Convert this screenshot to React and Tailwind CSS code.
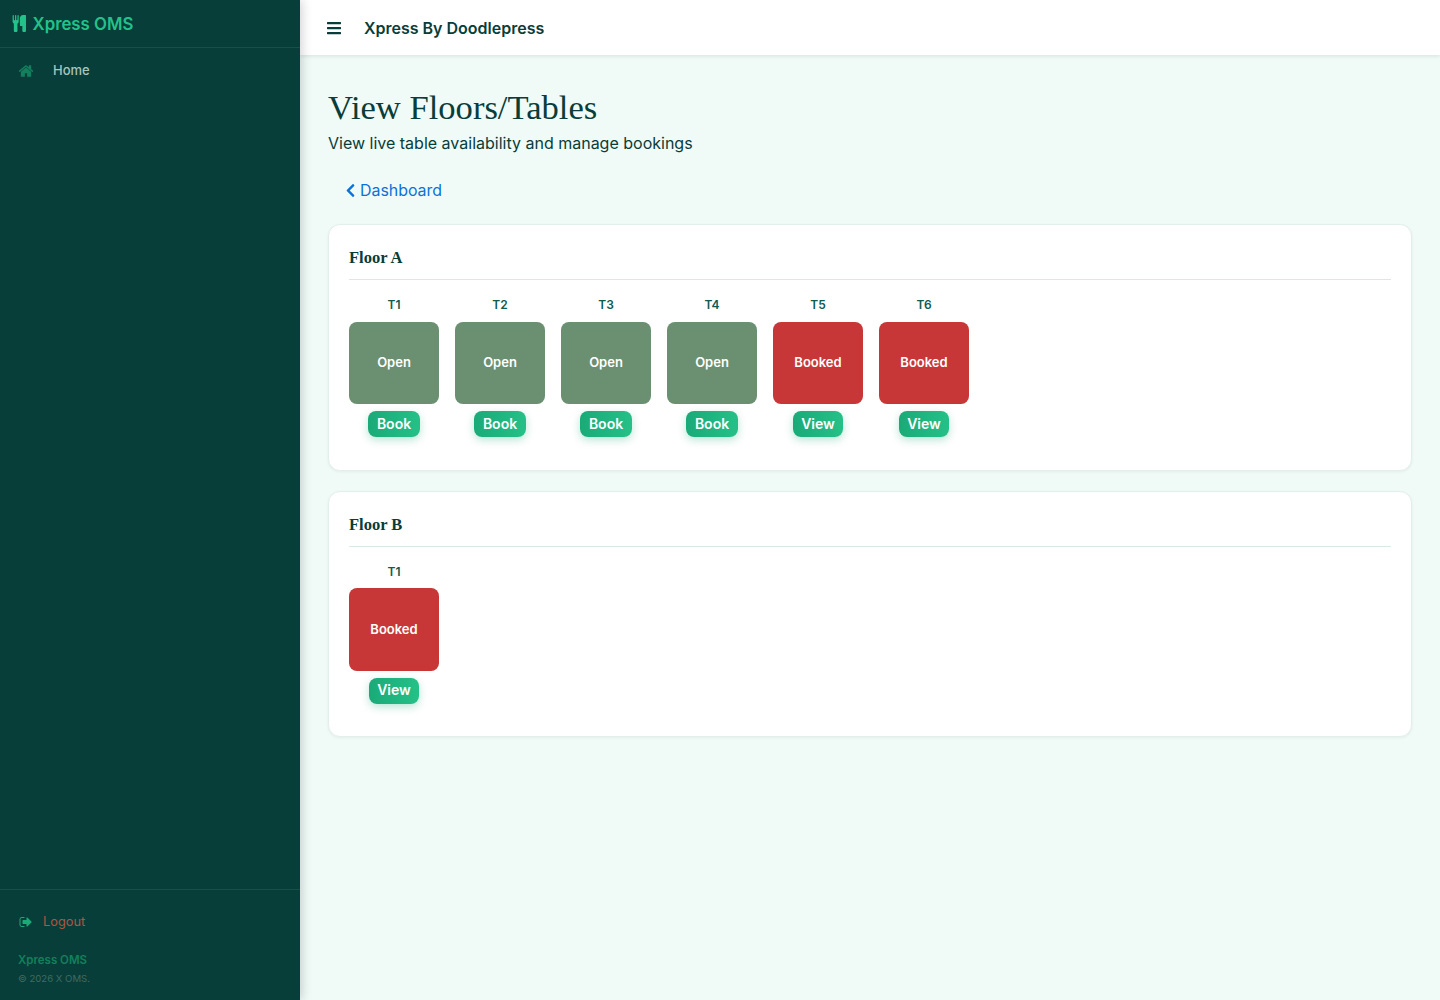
import { FaBars, FaChevronLeft } from "react-icons/fa";

const floorA = [
  { name: "T1", booked: false },
  { name: "T2", booked: false },
  { name: "T3", booked: false },
  { name: "T4", booked: false },
  { name: "T5", booked: true },
  { name: "T6", booked: true },
];

const floorB = [{ name: "T1", booked: true }];

// font awesome 4 glyphs, the react-icons ones have a different shape
const CutleryIcon = () => (
  <svg viewBox="0 0 1536 1792" className="h-[17px] w-[14.6px] fill-[#22c38a]">
    <path d="M704 64v640q0 61-35.5 111t-92.5 70v779q0 52-38 90t-90 38h-128q-52 0-90-38t-38-90v-779q-57-20-92.5-70t-35.5-111v-640q0-26 19-45t45-19 45 19 19 45v416q0 26 19 45t45 19 45-19 19-45v-416q0-26 19-45t45-19 45 19 19 45v416q0 26 19 45t45 19 45-19 19-45v-416q0-26 19-45t45-19 45 19 19 45zm768 0v1600q0 52-38 90t-90 38h-128q-52 0-90-38t-38-90v-512h-224q-13 0-22.5-9.5t-9.5-22.5v-800q0-132 94-226t226-94h256q26 0 45 19t19 45z" />
  </svg>
);

const HomeIcon = () => (
  <svg viewBox="0 0 1792 1792" className="h-[16px] w-[16px] fill-[#12805c]">
    <path d="M1472 992v480q0 26-19 45t-45 19h-384v-384h-256v384h-384q-26 0-45-19t-19-45v-480q0-1 .5-3t.5-3l575-474 575 474q1 2 1 6zm223-69l-62 74q-8 9-21 11h-3q-13 0-21-7l-692-577-692 577q-12 8-24 7-13-2-21-11l-62-74q-8-10-7-23.5t11-21.5l719-599q32-26 76-26t76 26l244 204v-195q0-14 9-23t23-9h192q14 0 23 9t9 23v408l219 182q10 8 11 21.5t-7 23.5z" />
  </svg>
);

const LogoutIcon = () => (
  <svg viewBox="0 0 1792 1792" className="h-[14px] w-[14px] fill-[#1aaa78]">
    <path d="M704 1440q0 4 1 20t.5 26.5-3 23.5-10 19.5-20.5 6.5h-320q-119 0-203.5-84.5t-84.5-203.5v-704q0-119 84.5-203.5t203.5-84.5h320q13 0 22.5 9.5t9.5 22.5q0 4 1 20t.5 26.5-3 23.5-10 19.5-20.5 6.5h-320q-66 0-113 47t-47 113v704q0 66 47 113t113 47h312l11.5 1 11.5 3 8 5.5 7 9 2 13.5zm928-544q0 26-19 45l-544 544q-19 19-45 19t-45-19-19-45v-288h-448q-26 0-45-19t-19-45v-384q0-26 19-45t45-19h448v-288q0-26 19-45t45-19 45 19l544 544q19 19 19 45z" />
  </svg>
);

const TableCard = ({ table }) => {
  return (
    <div className="flex w-[90px] flex-col items-center">
      <p className="mb-[7.5px] text-[12px] leading-[18px] font-semibold text-[#0f5c50]">{table.name}</p>
      <div
        className={
          table.booked
            ? "flex h-[82.5px] w-[90px] items-center justify-center rounded-lg bg-[#c73737] text-[13px] font-semibold text-white"
            : "flex h-[82.5px] w-[90px] items-center justify-center rounded-lg bg-[#6b8f71] text-[13px] font-semibold text-white"
        }
      >
        {table.booked ? "Booked" : "Open"}
      </div>
      <button
        className={
          table.booked
            ? "mt-[7px] h-[26px] w-[50px] rounded-lg bg-gradient-to-r from-[#1aaa78] to-[#25c088] pb-[2px] text-[14px] font-semibold text-white shadow-[0_3px_8px_rgba(26,170,120,0.3)]"
            : "mt-[7px] h-[26px] w-[52px] rounded-lg bg-gradient-to-r from-[#1aaa78] to-[#25c088] pb-[2px] text-[14px] font-semibold text-white shadow-[0_3px_8px_rgba(26,170,120,0.3)]"
        }
      >
        {table.booked ? "View" : "Book"}
      </button>
    </div>
  );
};

const FloorCard = ({ title, tables }) => {
  return (
    <div className="mb-[20px] rounded-xl border border-[#e3efeb] bg-white px-5 pt-5 pb-[32.5px] shadow-[0_1px_3px_rgba(8,61,58,0.06)]">
      <h2 className="border-b border-[#dbe8e4] pt-[1px] pb-[10px] font-['Liberation_Serif',serif] text-[16.5px] leading-[23px] font-bold text-[#083d3a]">
        {title}
      </h2>
      <div className="mt-4 flex gap-4">
        {tables.map((table) => (
          <TableCard key={table.name} table={table} />
        ))}
      </div>
    </div>
  );
};

const App = () => {
  return (
    <div className="flex h-[1000px] overflow-hidden bg-[#f0faf6] font-['Inter',sans-serif]">
      <aside className="z-20 flex h-full w-[300px] shrink-0 flex-col bg-[#073e39] shadow-[2px_0_10px_rgba(0,0,0,0.18)]">
        <div className="flex h-12 items-center gap-[6px] border-b border-[#175048] pl-3">
          <CutleryIcon />
          <span className="pt-[2px] text-[16.8px] font-semibold text-[#22c38a]">Xpress OMS</span>
        </div>
        <div className="flex h-[45px] items-center pt-[1px] pl-[18px]">
          <HomeIcon />
          <span className="ml-[19px] text-[13px] font-medium text-[#a9c4bc]">Home</span>
        </div>
        <div className="mt-auto h-[111px] border-t border-[#175048] pt-6 pl-[18px]">
          <div className="flex h-[16px] items-center pl-[1px]">
            <LogoutIcon />
            <span className="ml-[10px] text-[12.8px] text-[#b05542]">Logout</span>
          </div>
          <p className="mt-[22px] text-[11.5px] leading-[16px] font-semibold text-[#12805c]">Xpress OMS</p>
          <p className="mt-[4px] text-[9.6px] leading-[14px] text-[#3f6a64]">© 2026 X OMS.</p>
        </div>
      </aside>

      <div className="flex min-w-0 flex-1 flex-col">
        <header className="z-10 flex h-[55px] shrink-0 items-center bg-white pt-[1px] pl-[26px] shadow-[0_1px_4px_rgba(8,61,58,0.12)]">
          <FaBars className="text-[16px] text-[#083d3a]" />
          <span className="ml-[22px] text-[16px] font-semibold text-[#083d3a]">Xpress By Doodlepress</span>
        </header>

        <main className="flex-1 pt-[29px] pr-[28px] pl-[28px]">
          <h1 className="font-['Liberation_Serif',serif] text-[34.6px] leading-[46px] text-[#083d3a]">View Floors/Tables</h1>
          <p className="pt-[1px] text-[16px] leading-[24px] text-[#083d3a]">View live table availability and manage bookings</p>
          <a className="mt-[24px] mb-[21px] ml-[15px] flex items-center gap-[2px] text-[15.9px] leading-[24px] text-[#0b72d9]">
            <FaChevronLeft className="mb-[2px] text-[15px]" />
            Dashboard
          </a>
          <FloorCard title="Floor A" tables={floorA} />
          <FloorCard title="Floor B" tables={floorB} />
        </main>
      </div>
    </div>
  );
};

export default App;
